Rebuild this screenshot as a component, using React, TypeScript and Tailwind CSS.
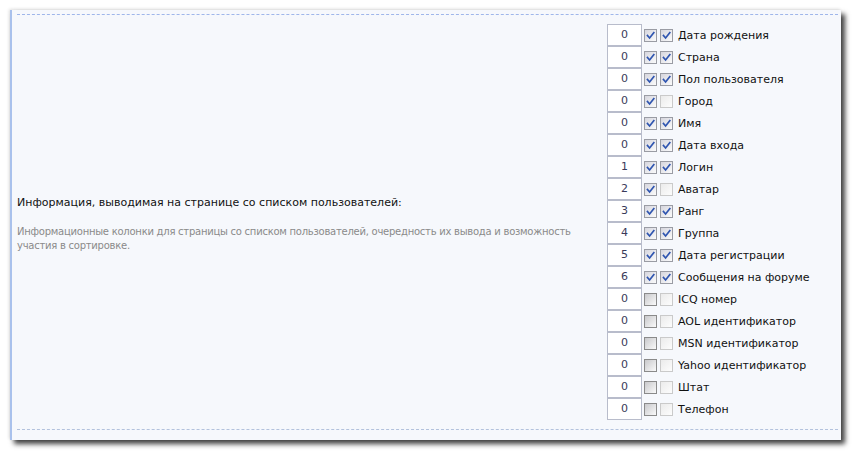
import React from "react";

type Row = { n: number; a: boolean; b: boolean; label: string };

const rows: Row[] = [
  { n: 0, a: true, b: true, label: "Дата рождения" },
  { n: 0, a: true, b: true, label: "Страна" },
  { n: 0, a: true, b: true, label: "Пол пользователя" },
  { n: 0, a: true, b: false, label: "Город" },
  { n: 0, a: true, b: true, label: "Имя" },
  { n: 0, a: true, b: true, label: "Дата входа" },
  { n: 1, a: true, b: true, label: "Логин" },
  { n: 2, a: true, b: false, label: "Аватар" },
  { n: 3, a: true, b: true, label: "Ранг" },
  { n: 4, a: true, b: true, label: "Группа" },
  { n: 5, a: true, b: true, label: "Дата регистрации" },
  { n: 6, a: true, b: true, label: "Сообщения на форуме" },
  { n: 0, a: false, b: false, label: "ICQ номер" },
  { n: 0, a: false, b: false, label: "AOL идентификатор" },
  { n: 0, a: false, b: false, label: "MSN идентификатор" },
  { n: 0, a: false, b: false, label: "Yahoo идентификатор" },
  { n: 0, a: false, b: false, label: "Штат" },
  { n: 0, a: false, b: false, label: "Телефон" },
];

function Check() {
  return (
    <svg width="11" height="11" viewBox="0 0 11 11" className="block">
      <path d="M2.5 5.5 L4.6 8 L8.8 2.6" fill="none" stroke="#2f55b0" strokeWidth="1.7" strokeLinecap="square" />
    </svg>
  );
}

function Box({ checked, variant }: { checked: boolean; variant: "a" | "b" }) {
  if (checked) {
    return (
      <div className="w-[13px] h-[13px] border border-[#9a9ca4] bg-gradient-to-br from-[#d6d6de] to-[#fbfbfb] flex items-center justify-center">
        <Check />
      </div>
    );
  }
  if (variant === "a") {
    return <div className="w-[13px] h-[13px] border border-[#8a8a8a] bg-gradient-to-br from-[#c9c9cc] to-[#fafafa]" />;
  }
  return <div className="w-[13px] h-[13px] border border-[#cacaca] bg-gradient-to-br from-[#ebebeb] to-[#fdfdfd]" />;
}

export default function App() {
  return (
    <div className="w-[852px] h-[451px] bg-white pt-[10px] pl-[10px]" style={{ fontFamily: '"DejaVu Sans", Verdana, sans-serif' }}>
      <div className="w-[831px] h-[430px] bg-[#f6f8fc] border-l-2 border-[#a9c1ec] pl-[5px] pr-[3px] pt-[4px] shadow-[4px_4px_5px_rgba(0,0,0,0.75),-1px_-1px_3px_rgba(0,0,0,0.12)]">
        <div className="h-[416px] border-t border-b border-dashed border-t-[#9fb6ea] border-b-[#b3c2dd] flex">
          <div className="w-[590px] flex flex-col justify-center pt-[5px]">
            <div className="text-[11px] leading-[14px] text-[#111]">Информация, выводимая на странице со списком пользователей:</div>
            <div className="mt-[15px] text-[10px] leading-[14px] tracking-[-0.25px] text-[#8a8a8a] pr-[10px]">
              Информационные колонки для страницы со списком пользователей, очередность их вывода и возможность участия в сортировке.
            </div>
          </div>
          <div className="pt-[9px]">
            {rows.map((r, i) => (
              <div key={i} className="flex items-center h-[22px]">
                <div className="w-[35px] h-[22px] border border-[#b8bccb] bg-white flex items-center justify-center pt-[1px] text-[11px] text-[#3a3a5a]">
                  {r.n}
                </div>
                <div className="ml-[2px]"><Box checked={r.a} variant="a" /></div>
                <div className="ml-[3px]"><Box checked={r.b} variant="b" /></div>
                <div className="ml-[5px] pt-[2px] text-[11px] text-[#111] whitespace-nowrap">{r.label}</div>
              </div>
            ))}
          </div>
        </div>
      </div>
    </div>
  );
}
